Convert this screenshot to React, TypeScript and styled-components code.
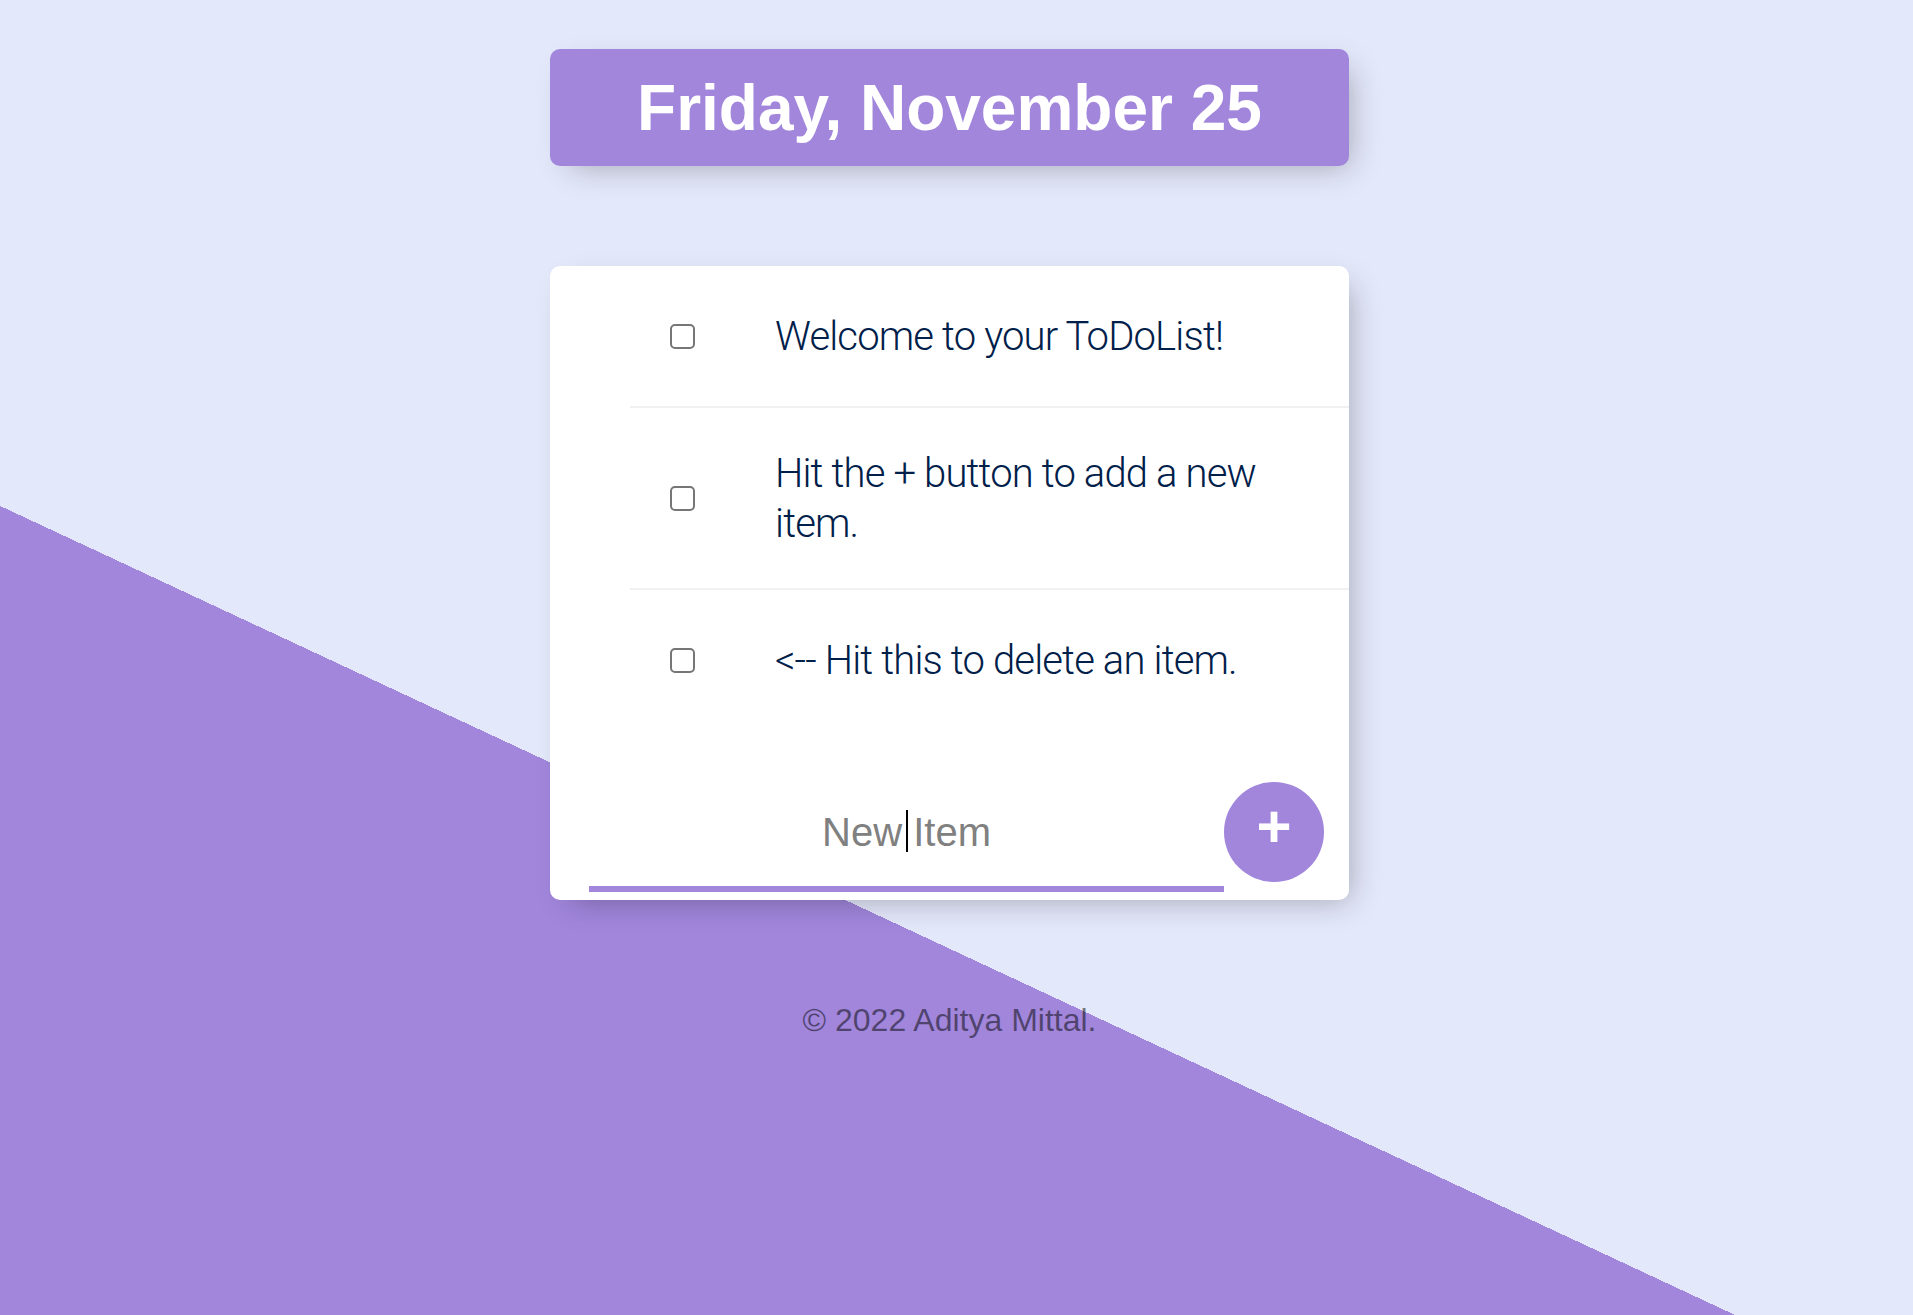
import React from 'react';
import styled, { createGlobalStyle } from 'styled-components';

const purple = '#a186dc';
const lavender = '#e4e8fb';

const GlobalStyle = createGlobalStyle`
  html, body {
    margin: 0;
    padding: 0;
  }
  body {
    font-family: 'Liberation Sans', Arial, sans-serif;
  }
`;

// right padding keeps the column where the original page's scrollbar left it
const Page = styled.div`
  min-height: 100vh;
  box-sizing: border-box;
  padding: 49px 14px 0 0;
  display: flex;
  flex-direction: column;
  align-items: center;
  background-color: ${lavender};
  background-image: linear-gradient(25deg, ${purple} 36.66%, ${lavender} 36.66%);
`;

const Box = styled.div`
  width: 799px;
  border-radius: 10px;
  background: #fff;
  box-shadow: 10px 10px 30px -10px rgba(0, 0, 0, 0.3);
`;

const Heading = styled(Box)`
  height: 117px;
  display: flex;
  align-items: center;
  justify-content: center;
  background: ${purple};
`;

const Title = styled.h1`
  margin: 0;
  color: #fff;
  font-size: 64px;
  font-weight: 700;
`;

const Card = styled(Box)`
  margin-top: 100px;
`;

const Item = styled.div<{ $last?: boolean }>`
  margin-left: 80px;
  min-height: 140px;
  display: flex;
  align-items: center;
  border-bottom: ${(p) => (p.$last ? 'none' : '2px solid #f1f1f1')};
`;

const Check = styled.input.attrs({ type: 'checkbox' })`
  appearance: none;
  flex-shrink: 0;
  box-sizing: border-box;
  width: 25px;
  height: 25px;
  margin: 0 40px;
  border: 2px solid #767676;
  border-radius: 5px;
  background: #fff;
`;

const Text = styled.p`
  margin: 0;
  padding: 41px 40px 39px;
  font-family: Roboto, 'Liberation Sans', sans-serif;
  font-size: 40px;
  font-weight: 300;
  line-height: 50px;
  letter-spacing: -0.85px;
  color: #00204a;
`;

const NewItemForm = styled.form`
  display: flex;
  align-items: center;
  padding: 42px 0 8px 39px;
`;

const InputWrap = styled.div`
  position: relative;
  width: 635px;
  height: 120px;

  &::after {
    content: '';
    position: absolute;
    left: 317px;
    top: 38px;
    width: 2px;
    height: 42px;
    background: #000;
  }
`;

const TextInput = styled.input`
  width: 100%;
  height: 100%;
  box-sizing: border-box;
  border: none;
  outline: none;
  background: transparent;
  text-align: center;
  font-family: 'Liberation Sans', Arial, sans-serif;
  font-size: 40px;
  color: #00204a;
  box-shadow: inset 0 -6px 0 0 ${purple};
  caret-color: transparent;

  &::placeholder {
    color: grey;
    opacity: 1;
  }
`;

const AddButton = styled.button`
  flex-shrink: 0;
  width: 100px;
  height: 100px;
  padding: 0 0 10px;
  border: none;
  border-radius: 50%;
  background: ${purple};
  color: #fff;
  font-family: 'Liberation Sans', Arial, sans-serif;
  font-size: 60px;
  font-weight: 700;
  line-height: 1;
  cursor: pointer;
`;

const Footer = styled.footer`
  margin-top: 100px;
  font-size: 32px;
  line-height: 40px;
  text-align: center;
  color: rgba(0, 0, 0, 0.5);
`;

const items = [
  'Welcome to your ToDoList!',
  'Hit the + button to add a new item.',
  '<-- Hit this to delete an item.',
];

export default function App() {
  return (
    <>
      <GlobalStyle />
      <Page>
        <Heading>
          <Title>Friday, November 25</Title>
        </Heading>
        <Card>
          {items.map((text, i) => (
            <Item key={text} $last={i === items.length - 1}>
              <Check />
              <Text>{text}</Text>
            </Item>
          ))}
          <NewItemForm onSubmit={(e) => e.preventDefault()}>
            <InputWrap>
              <TextInput type="text" placeholder="New Item" autoComplete="off" />
            </InputWrap>
            <AddButton type="submit">+</AddButton>
          </NewItemForm>
        </Card>
        <Footer>© 2022 Aditya Mittal.</Footer>
      </Page>
    </>
  );
}
